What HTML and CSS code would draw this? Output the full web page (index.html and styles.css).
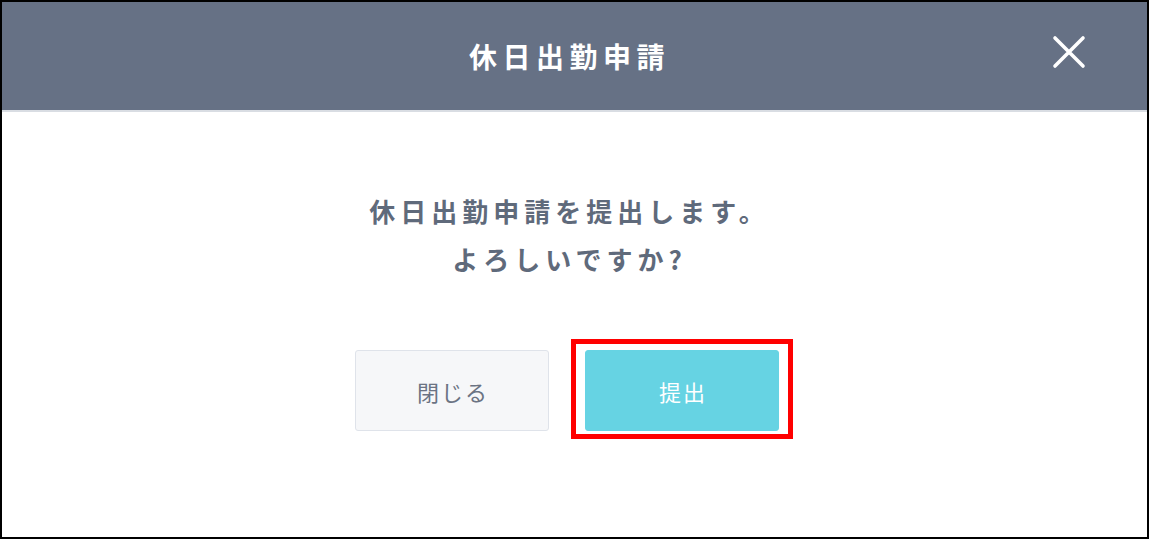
FILE: index.html
```
<!DOCTYPE html>
<html lang="ja">
<head>
<meta charset="utf-8">
<title>休日出勤申請</title>
<link rel="stylesheet" href="styles.css">
</head>
<body>
<div class="modal">
  <header class="modal-header">
    <h1 class="modal-title">休日出勤申請</h1>
    <button class="close-btn" aria-label="閉じる">
      <svg width="34" height="34" viewBox="0 0 34 34"><path d="M3 3 L31 31 M31 3 L3 31" stroke="#ffffff" stroke-width="3.6" stroke-linecap="round" fill="none"/></svg>
    </button>
  </header>
  <main class="modal-body">
    <p class="message">休日出勤申請を提出します。<br>よろしいですか?</p>
    <div class="actions">
      <button class="btn btn-secondary">閉じる</button>
      <button class="btn btn-primary highlighted">提出</button>
    </div>
  </main>
</div>
</body>
</html>
```

FILE: styles.css
```
html, body {
  margin: 0;
  padding: 0;
  background: #ffffff;
}
body {
  font-family: "Noto Sans CJK JP", "Noto Sans", sans-serif;
}
.modal {
  box-sizing: border-box;
  width: 1149px;
  height: 539px;
  border: 2px solid #000000;
  display: flex;
  flex-direction: column;
  background: #ffffff;
}
.modal-header {
  height: 108px;
  background: #667185;
  border-bottom: 2px solid #d9dde3;
  display: flex;
  align-items: center;
  justify-content: center;
  position: relative;
  padding-right: 15px;
}
.modal-title {
  margin: 0;
  color: #ffffff;
  font-size: 28px;
  font-weight: 700;
  letter-spacing: 5.5px;
  line-height: 1;
  padding-left: 5px;
}
.close-btn {
  position: absolute;
  right: 61px;
  top: 33px;
  width: 34px;
  height: 34px;
  padding: 0;
  border: 0;
  background: transparent;
  display: flex;
  align-items: center;
  justify-content: center;
}
.modal-body {
  flex: 1;
  display: flex;
  flex-direction: column;
  align-items: center;
  padding: 75px 15px 0 0;
}
.message {
  margin: 0;
  text-align: center;
  color: #5f6a7b;
  font-size: 26px;
  font-weight: 700;
  line-height: 48px;
  letter-spacing: 5px;
  padding-left: 5px;
}
.actions {
  display: flex;
  gap: 36px;
  margin-top: 67px;
}
.btn {
  box-sizing: border-box;
  width: 194px;
  height: 81px;
  border-radius: 3px;
  font-family: "Noto Sans CJK JP", "Noto Sans", sans-serif;
  font-size: 22px;
  letter-spacing: 2px;
  padding: 0 0 0 2px;
  cursor: pointer;
}
.btn-secondary {
  background: #f6f7f9;
  border: 1px solid #dfe3ea;
  color: #6b7383;
}
.btn-primary {
  background: #66d3e3;
  border: 1px solid #66d3e3;
  color: #ffffff;
}
.highlighted {
  position: relative;
}
.highlighted::after {
  content: "";
  position: absolute;
  top: -12px;
  left: -15px;
  right: -15px;
  bottom: -9px;
  border: 5px solid #ff0000;
  pointer-events: none;
}
```
